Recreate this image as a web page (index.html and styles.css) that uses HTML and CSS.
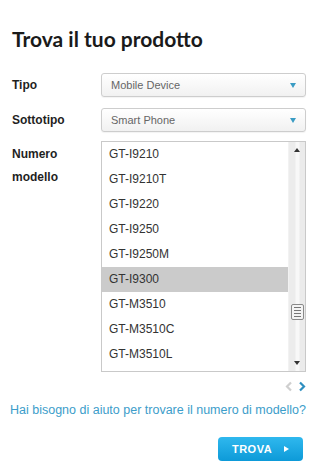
FILE: index.html
```html
<!DOCTYPE html>
<html lang="it">
<head>
<meta charset="utf-8">
<title>Trova il tuo prodotto</title>
<link rel="stylesheet" href="styles.css">
</head>
<body>
<div class="finder">
  <h1 class="title">Trova il tuo prodotto</h1>
  <div class="form">
    <div class="label">Tipo</div>
    <div class="select"><span>Mobile Device</span><i class="caret"></i></div>
    <div class="label">Sottotipo</div>
    <div class="select"><span>Smart Phone</span><i class="caret"></i></div>
    <div class="label label-multi">Numero<br>modello</div>
    <div class="listbox">
      <ul class="options">
        <li>GT-I9210</li>
        <li>GT-I9210T</li>
        <li>GT-I9220</li>
        <li>GT-I9250</li>
        <li>GT-I9250M</li>
        <li class="selected">GT-I9300</li>
        <li>GT-M3510</li>
        <li>GT-M3510C</li>
        <li>GT-M3510L</li>
      </ul>
      <div class="scrollbar">
        <i class="sb-up"></i>
        <div class="sb-track"><div class="sb-thumb"><b></b><b></b><b></b><b></b></div></div>
        <i class="sb-down"></i>
      </div>
    </div>
  </div>
  <div class="pager">
    <svg width="8" height="11" viewBox="0 0 8 11"><path d="M6 1.5 L2 5.5 L6 9.5" fill="none" stroke="#cfcfcf" stroke-width="2.2"/></svg>
    <svg width="8" height="11" viewBox="0 0 8 11"><path d="M2 1.5 L6 5.5 L2 9.5" fill="none" stroke="#2e8fc0" stroke-width="2.2"/></svg>
  </div>
  <a class="help" href="#">Hai bisogno di aiuto per trovare il numero di modello?</a>
  <div class="actions">
    <button class="btn" type="button">TROVA <i class="btn-arrow"></i></button>
  </div>
</div>
</body>
</html>
```

FILE: styles.css
```css
* { box-sizing: border-box; }
html, body { margin: 0; padding: 0; background: #fff; }
body { font-family: "Liberation Sans", Arial, sans-serif; color: #222; }

.finder { width: 323px; height: 474px; padding: 26px 17px 0 12px; }

.title {
  margin: 0;
  font-family: Lato, "Open Sans", sans-serif;
  font-weight: 700;
  font-size: 21px;
  line-height: 26px;
  color: #1a1a1a;
  letter-spacing: 0;
}

.form {
  display: grid;
  grid-template-columns: 89px 205px;
  row-gap: 11px;
  margin-top: 21px;
}

.label {
  font-weight: bold;
  font-size: 12px;
  line-height: 24px;
  color: #1f1f1f;
}
.label-multi { line-height: 23px; margin-top: 0; }

.select {
  height: 24px;
  border: 1px solid #cdcdcd;
  border-radius: 3px;
  background: linear-gradient(#ffffff, #f1f1f1);
  display: flex;
  align-items: center;
  justify-content: space-between;
  padding: 0 9px 0 9px;
  font-size: 11px;
  color: #666;
  box-shadow: 0 1px 1px rgba(0,0,0,0.05);
}
.caret {
  width: 0; height: 0;
  border-left: 3px solid transparent;
  border-right: 3px solid transparent;
  border-top: 5px solid #3a9cc4;
}

.listbox {
  height: 231px;
  margin-top: -2px;
  border: 1px solid #c9c9c9;
  display: flex;
}
.options {
  list-style: none;
  margin: 0;
  padding: 0;
  flex: 1;
}
.options li {
  height: 25px;
  line-height: 25px;
  padding-left: 7px;
  font-size: 12px;
  color: #333;
}
.options li.selected { background: #cbcbcb; }

.scrollbar {
  width: 17px;
  background: linear-gradient(90deg, #ececec 0, #ececec 6px, #f8f8f8 7px, #f8f8f8 10px, #ebebeb 11px, #ebebeb 100%);
  border-left: 1px solid #f2f2f2;
  display: flex;
  flex-direction: column;
  align-items: center;
}
.sb-up, .sb-down {
  width: 0; height: 0;
  border-left: 3px solid transparent;
  border-right: 3px solid transparent;
  margin: 6px 0;
}
.sb-up { border-bottom: 4px solid #333; }
.sb-down { border-top: 4px solid #333; }
.sb-track { flex: 1; width: 100%; display: flex; flex-direction: column; justify-content: flex-end; padding-bottom: 35px; align-items: center; }
.sb-thumb {
  width: 13px;
  height: 16px;
  border: 1px solid #8a8a8a;
  border-radius: 2px;
  background: #f4f4f4;
  display: flex;
  flex-direction: column;
  justify-content: center;
  gap: 2px;
  padding: 0 2px;
}
.sb-thumb b { display: block; height: 1px; background: #777; }

.pager {
  display: flex;
  justify-content: flex-end;
  gap: 5px;
  margin-top: 9px;
  height: 11px;
}

.help {
  display: block;
  margin-top: 11px;
  margin-left: -2px;
  font-size: 12.5px;
  line-height: 15px;
  color: #3c9dca;
  text-decoration: none;
  white-space: nowrap;
}

.actions {
  display: flex;
  justify-content: flex-end;
  margin-top: 19px;
}
.btn {
  width: 85px;
  height: 24px;
  margin-right: 3px;
  border: 0;
  border-radius: 4px;
  background: linear-gradient(#2fb8ee, #0d9ad8);
  color: #fff;
  font-family: "Liberation Sans", Arial, sans-serif;
  font-weight: bold;
  font-size: 11px;
  letter-spacing: 0.5px;
  display: flex;
  align-items: center;
  justify-content: center;
  gap: 12px;
  padding: 0;
}
.btn-arrow {
  width: 0; height: 0;
  border-top: 3px solid transparent;
  border-bottom: 3px solid transparent;
  border-left: 5px solid #fff;
}
```
